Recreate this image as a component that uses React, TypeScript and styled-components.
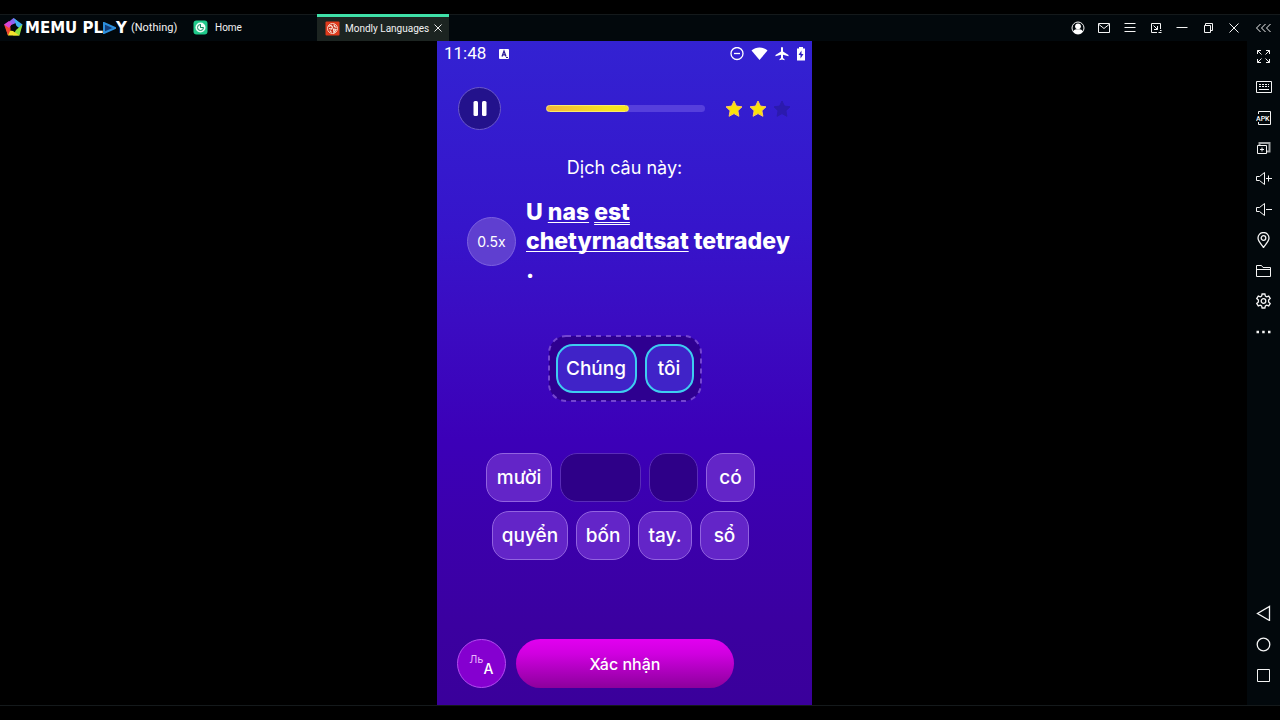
import React from 'react';
import styled, { createGlobalStyle, css } from 'styled-components';

const GlobalStyle = createGlobalStyle`
  *, *::before, *::after { box-sizing: border-box; }
  body { margin: 0; background: #000; }
  button { font: inherit; color: inherit; padding: 0; border: 0; background: none; cursor: pointer; }
  svg { display: block; flex: none; }
`;

const chromeColor = '#02080c';
const edgeColor = '#14191b';

const Page = styled.div`
  display: flex;
  flex-direction: column;
  min-height: 100vh;
  padding: 14px 0;
  background: #000;
  color: #fff;
  font-family: Roboto, sans-serif;
`;

const TitleBar = styled.header`
  display: flex;
  align-items: stretch;
  height: 27px;
  background: ${chromeColor};
  box-shadow: inset 0 1px ${edgeColor};
  font-size: 11px;
  color: #f2f2f2;
`;

const Brand = styled.div`
  display: flex;
  align-items: center;
  width: 184px;
  padding-left: 4px;
`;

const BrandName = styled.span`
  display: flex;
  align-items: center;
  margin: 0 4px 0 2px;
  font: bold 15px/16px 'DejaVu Sans', sans-serif;
  color: #fff;
`;

const Tab = styled.button<{ $active?: boolean }>`
  display: flex;
  align-items: center;
  gap: 7px;
  width: 133px;
  padding-left: 9px;
  font-size: 10px;
  white-space: nowrap;
  ${(p) =>
    p.$active &&
    css`
      width: 132px;
      background: #1c2421;
      border-top: 3px solid #3fe0a8;
      gap: 5px;
      padding-left: 8px;
      padding-bottom: 2px;
    `}
`;

const WindowTools = styled.div`
  display: flex;
  margin-left: auto;
`;

const ToolButton = styled.button<{ $width: number }>`
  display: grid;
  place-items: center;
  width: ${(p) => p.$width}px;
`;

const Body = styled.div`
  display: flex;
  flex: 1;
  border-bottom: 1px solid ${edgeColor};
`;

const Stage = styled.main`
  display: flex;
  flex: 1;
  justify-content: center;
  padding-left: 2px;
`;

const SideBar = styled.aside`
  display: flex;
  flex-direction: column;
  justify-content: space-between;
  width: 33px;
  padding: 1px 0 15px;
  background: ${chromeColor};
`;

const SideGroup = styled.nav<{ $height: number }>`
  display: flex;
  flex-direction: column;
  height: ${(p) => p.$height}px;
`;

const SideButton = styled.button`
  display: grid;
  place-items: center;
  flex: 1;
`;

const Phone = styled.section`
  display: flex;
  flex-direction: column;
  width: 375px;
  background: linear-gradient(#3322d2 0%, #3615cb 28%, #3b0cc2 42%, #3c00b8 60%, #3b00a0 88%, #3a009b 100%);
  font-family: Inter, 'Noto Sans', sans-serif;
`;

const StatusBar = styled.div`
  display: flex;
  align-items: center;
  gap: 12px;
  height: 25px;
  padding: 0 6px 0 7px;
  font: 400 17px/25px Roboto, sans-serif;
`;

const StatusIcons = styled.div`
  display: flex;
  align-items: center;
  gap: 7px;
  margin-left: auto;
`;

const LessonHeader = styled.div`
  display: flex;
  align-items: center;
  height: 43px;
  margin: 21px 21px 0 21px;
`;

const PauseButton = styled.button`
  display: grid;
  place-items: center;
  width: 43px;
  height: 43px;
  border: 1px solid #6a58c8;
  border-radius: 50%;
  background: #23128c;
`;

const Track = styled.div`
  flex: 1;
  height: 7px;
  margin: 0 20px 0 45px;
  border-radius: 4px;
  background: #563fdc;
`;

const Fill = styled.div`
  height: 100%;
  border: 1px solid #fbe96a;
  border-radius: 4px;
  background: linear-gradient(90deg, #f3b63a, #f7e51e 75%);
`;

const Stars = styled.div`
  display: flex;
  gap: 6px;
`;

const Prompt = styled.h1`
  margin: 25px 0 0;
  font-size: 18px;
  line-height: 26px;
  font-weight: 400;
  text-align: center;
`;

const SentenceRow = styled.div`
  display: flex;
  align-items: center;
  gap: 10px;
  margin: 17px 0 0 30px;
`;

const SpeedButton = styled.button`
  width: 49px;
  height: 49px;
  border: 1px solid #7d62e0;
  border-radius: 50%;
  background: #5f3fd0;
  font-size: 14px;
`;

const Sentence = styled.p`
  margin: 0;
  font-size: 23px;
  line-height: 29px;
  font-weight: 800;
  white-space: nowrap;
`;

const Word = styled.span<{ $double?: boolean }>`
  text-decoration: underline ${(p) => (p.$double ? 'double' : 'solid')} 1px;
  text-underline-offset: 2px;
  text-decoration-skip-ink: none;
`;

const Tray = styled.div`
  position: relative;
  display: flex;
  align-self: center;
  gap: 8px;
  margin-top: 50px;
  padding: 9px 8px;
`;

const TrayOutline = styled.svg`
  position: absolute;
  inset: 1px;
  width: calc(100% - 2px);
  height: calc(100% - 2px);
  overflow: visible;
`;

type TileKind = 'choice' | 'picked' | 'used';

const tileKinds = {
  choice: css`
    border: 1px solid #9263e0;
    background: #6325c8;
  `,
  picked: css`
    border: 2px solid #3ecdf0;
    background: #4023c8;
  `,
  used: css`
    border: 1px solid #5a2cb8;
    background: #2e0088;
  `,
};

const Tile = styled.button<{ $kind: TileKind; $width: number }>`
  position: relative;
  width: ${(p) => p.$width}px;
  height: 49px;
  border-radius: 17px;
  font-size: 19px;
  font-weight: 500;
  ${(p) => tileKinds[p.$kind]}
`;

const Bank = styled.div`
  display: flex;
  flex-direction: column;
  align-items: center;
  gap: 9px;
  margin: 51px 8px 0 0;
`;

const BankRow = styled.div`
  display: flex;
  gap: 8px;
`;

const Actions = styled.div`
  display: flex;
  gap: 10px;
  margin-top: auto;
  padding: 20px 78px 17px 20px;
`;

const AlphabetButton = styled.button`
  display: flex;
  justify-content: center;
  align-items: center;
  width: 49px;
  height: 49px;
  border: 1px solid #b44cf0;
  border-radius: 50%;
  background: #8500d0;
`;

const Cyrillic = styled.span`
  align-self: flex-start;
  padding-top: 13px;
  font: 400 11px/12px 'Noto Sans', sans-serif;
  color: #eab4fb;
`;

const Latin = styled.span`
  align-self: flex-end;
  padding-bottom: 11px;
  font-size: 14px;
  font-weight: 500;
  line-height: 14px;
`;

const ConfirmButton = styled.button`
  flex: 1;
  height: 49px;
  border-radius: 25px;
  background: linear-gradient(#e200f0, #d000e0 30%, #8c009c);
  font-size: 16px;
  font-weight: 500;
`;

const Line = ({ children }: { children: React.ReactNode }) => (
  <svg width="16" height="16" viewBox="0 0 16 16" fill="none" stroke="#f4f4f4" aria-hidden="true">
    {children}
  </svg>
);

const windowTools: [string, React.ReactNode][] = [
  ['Account', <><circle cx="8" cy="8" r="6" /><circle cx="8" cy="6.3" r="2.9" fill="#fff" stroke="none" /><path d="M3 11.500C4 9.400 6 9.200 8 9.200s4 .2 5 2.300C11.500 13.500 10 14 8 14s-3.500-.5-5-2.500Z" fill="#fff" stroke="none" /></>],
  ['Messages', <><path d="M2.500 3.500h11v9h-11z" /><path d="m3 4.500 5 4 5-4" /></>],
  ['Menu', <path d="M2.500 3.500h11M2.500 7.500h11M2.500 11.500h11" />],
  ['Mini window', <><path d="M9 12.500H3.500v-9h9V9" /><path d="m5.500 5.500 4 4m0-3.500v3.500H6M10.500 12.500h3M12 10.500h1.500" /></>],
  ['Minimize', <path d="M2.500 7.500h11" />],
  ['Restore', <><path d="M4.500 5.500h6v7h-6z" /><path d="M5.500 5.500v-2h7v7h-2" /></>],
  ['Close', <path d="m3.500 3.500 9 9m0-9-9 9" />],
];

const sideTools: [string, React.ReactNode][] = [
  ['Full screen', <path d="M1.500 5V1.500H5M1.500 1.500l4 4M10 1.500h3.500V5M13.500 1.500l-4 4M1.500 10v3.500H5M1.500 13.500l4-4M13.500 10v3.500H10M13.500 13.500l-4-4" />],
  ['Keyboard', <><path d="M.5 1.500h15v11H.5z" /><path d="M3 4.500h10M3 6.500h10" strokeDasharray="2 1" /><path d="M3 9.500h10" /></>],
  ['Install APK', <><path d="M2.500 4V1.500h12v13h-12V12" /><text x="0" y="11" fontSize="7" fontWeight="500" fill="#fff" stroke="none" fontFamily="Roboto, sans-serif">APK</text></>],
  ['Multi instance', <><path d="M1.500 4.500h9v8h-9z" /><path d="M3.500 4V2h10v8.500H11" strokeWidth="2" stroke="#a0a3a4" /><path d="M6 6.500v4M4 8.500h4" /></>],
  ['Volume up', <path d="M.5 5.500h3l5-4v12l-5-4h-3zM10 7.500h6M12.500 4.500v6" />],
  ['Volume down', <path d="M.5 5.500h3l5-4v12l-5-4h-3zM10 7.500h6" />],
  ['Location', <><path d="M7.500 15.500C5 12 2 9 2 6a5.500 5.500 0 0 1 11 0c0 3-3 6-5.500 9.500Z" strokeWidth="1.300" /><circle cx="7.500" cy="6" r="2.300" strokeWidth="1.300" /></>],
  ['Shared folder', <path d="M.5 13.500v-11h5l1.500 2h7.500v9zM.5 6.500h14" />],
  ['Settings', <g transform="translate(-.5 0)" strokeWidth="1.300"><path d="M6.600 1h2.800l.5 2.100 1.300.7 2-.7 1.500 2.400-1.600 1.500v2l1.600 1.500-1.500 2.400-2-.7-1.300.7-.5 2.100H6.600l-.5-2.100-1.300-.7-2 .7-1.500-2.400L2.900 9V7L1.300 5.500l1.500-2.400 2 .7 1.300-.7z" /><circle cx="8" cy="8" r="2.300" /></g>],
  ['More', <path d="M.5 8H3M6.200 8h2.500M12 8h2.500" strokeWidth="2.500" />],
];

const navTools: [string, React.ReactNode][] = [
  ['Back', <path d="M13.500 1.500v14L1.500 8.500z" strokeWidth="1.300" />],
  ['Home screen', <circle cx="7.500" cy="8.500" r="6.300" strokeWidth="1.300" />],
  ['Recent apps', <path d="M1.500 2.500h12v12h-12z" />],
];

const BrandLogo = () => (
  <svg width="19" height="19" viewBox="0 0 19 19" aria-hidden="true">
    <path d="M9.500 0 14 3.500 9 6.500 5 7 1 7z" fill="#8a63f0" />
    <path d="M9.500 0 18.500 6.500 16.500 11 12.500 8z" fill="#3fb0f0" />
    <path d="M18.500 6.500 15.500 17.500 9 17.500 12 12z" fill="#8ee03a" />
    <path d="M15.500 17.500H4L2.500 12 9 13z" fill="#f5e12c" />
    <path d="M0 6.500 6.500 7 6.500 12 4 17.500z" fill="#f0472f" />
    <path d="M0 6.500 5 3l3 3-3 4z" fill="#d746d8" />
    <path d="m9.500 6 3 2.500-1 3.500h-4L6.500 8.500z" fill="#03080b" />
  </svg>
);

const Star = ({ on }: { on: boolean }) => (
  <svg width="18" height="18" viewBox="0 0 18 18" aria-hidden="true">
    <path
      d="m9 1 2.400 5.100 5.600.7-4.100 3.900 1 5.600L9 13.600l-4.900 2.700 1-5.600L1 6.800l5.600-.7z"
      fill={on ? '#fbe308' : '#2b1aae'}
      stroke={on ? '#fbc65a' : '#2b1aae'}
      strokeLinejoin="round"
    />
  </svg>
);

const picked = [
  { text: 'Chúng', width: 81 },
  { text: 'tôi', width: 49 },
];

const bank: { text: string; width: number; kind: TileKind }[][] = [
  [
    { text: 'mười', width: 66, kind: 'choice' },
    { text: '', width: 81, kind: 'used' },
    { text: '', width: 49, kind: 'used' },
    { text: 'có', width: 49, kind: 'choice' },
  ],
  [
    { text: 'quyển', width: 76, kind: 'choice' },
    { text: 'bốn', width: 54, kind: 'choice' },
    { text: 'tay.', width: 54, kind: 'choice' },
    { text: 'sổ', width: 49, kind: 'choice' },
  ],
];

export default function App() {
  return (
    <Page>
      <GlobalStyle />
      <TitleBar>
        <Brand>
          <BrandLogo />
          <BrandName>
            MEMU&nbsp;PL
            <svg width="13" height="12" viewBox="0 0 13 12" aria-hidden="true">
              <path d="M1 1v10l11-5z" fill="#123c78" stroke="#2d8fdc" strokeWidth="2" />
            </svg>
            Y
          </BrandName>
          (Nothing)
        </Brand>
        <Tab>
          <svg width="15" height="15" viewBox="0 0 15 15" aria-hidden="true">
            <rect x=".5" y=".5" width="14" height="14" rx="3" fill="#1fc98a" />
            <circle cx="7.500" cy="7.500" r="5" fill="#effff8" />
            <path d="M7.500 4.500a3 3 0 1 0 3 3h-3zM7.500 4.500v3" fill="none" stroke="#128a60" />
          </svg>
          Home
        </Tab>
        <Tab $active>
          <svg width="15" height="15" viewBox="0 0 15 15" aria-hidden="true">
            <rect x=".5" y=".5" width="14" height="14" rx="1" fill="#e03a1c" />
            <circle cx="7.500" cy="7.500" r="5" fill="#c9301a" stroke="#f7d3c4" />
            <path d="M3.500 5.500 6 4.500l1.500 1.500L6.500 8 4 7.500M9 3.500l.5 2 2 1M8.500 8l2.500.5L9 11.500zM5 9.500l1.500 2" fill="none" stroke="#fbe6d8" strokeWidth="1.200" />
          </svg>
          Mondly Languages
          <svg width="8" height="8" viewBox="0 0 8 8" stroke="#e8e8e8" aria-hidden="true">
            <path d="m.5.5 7 7m0-7-7 7" />
          </svg>
        </Tab>
        <WindowTools>
          {windowTools.map(([name, art]) => (
            <ToolButton key={name} $width={26} aria-label={name}>
              <Line>{art}</Line>
            </ToolButton>
          ))}
          <ToolButton $width={33} aria-label="Collapse side bar">
            <Line>
              <path d="M4.500 4 .5 8l4 4M9.500 4l-4 4 4 4M14.500 4l-4 4 4 4" />
            </Line>
          </ToolButton>
        </WindowTools>
      </TitleBar>
      <Body>
        <Stage>
          <Phone>
            <StatusBar>
              11:48
              <svg width="12" height="12" viewBox="0 0 12 12" aria-hidden="true">
                <rect x="1" y="1" width="10" height="10" rx="1" fill="#fff" />
                <path d="M4 8.500 6 3l2 5.500M4.700 6.800h2.600M8 9.500h2" fill="none" stroke="#2a1c96" strokeWidth="1.200" />
              </svg>
              <StatusIcons>
                <svg width="14" height="14" viewBox="0 0 14 14" fill="none" stroke="#fff" strokeWidth="1.300" aria-hidden="true">
                  <circle cx="7" cy="6.500" r="6" />
                  <path d="M4 6.500h6" />
                </svg>
                <svg width="17" height="14" viewBox="0 0 17 14" fill="#fff" aria-hidden="true">
                  <path d="M.5 3.500C5-.5 12-.5 16.500 3.500L8.500 13z" />
                </svg>
                <svg width="14" height="14" viewBox="0 0 14 14" fill="#fff" aria-hidden="true">
                  <path d="M6 1a1 1 0 0 1 2 0v3.500L13.500 8v1.300L8 7.700V11l1.500 1.200v1L7 12.500l-2.500.7v-1L6 11V7.700L.5 9.300V8L6 4.500z" />
                </svg>
                <svg width="10" height="14" viewBox="0 0 10 14" aria-hidden="true">
                  <path d="M3 0h4v1.500h2V13.500H1v-12h2z" fill="#fff" />
                  <path d="M5.500 3.500V7h2l-3 4.500V8h-2z" fill="#2e1ec0" />
                </svg>
              </StatusIcons>
            </StatusBar>
            <LessonHeader>
              <PauseButton aria-label="Pause">
                <svg width="14" height="15" viewBox="0 0 14 15" fill="#fff" aria-hidden="true">
                  <rect x=".5" y="0" width="4.500" height="15" rx="1.500" />
                  <rect x="9" y="0" width="4.500" height="15" rx="1.500" />
                </svg>
              </PauseButton>
              <Track>
                <Fill style={{ width: '52%' }} />
              </Track>
              <Stars>
                <Star on />
                <Star on />
                <Star on={false} />
              </Stars>
            </LessonHeader>
            <Prompt>Dịch câu này:</Prompt>
            <SentenceRow>
              <SpeedButton>0.5x</SpeedButton>
              <Sentence>
                U <Word>nas</Word> <Word $double>est</Word>
                <br />
                <Word>chetyrnadtsat</Word> tetradey
                <br />.
              </Sentence>
            </SentenceRow>
            <Tray>
              <TrayOutline aria-hidden="true">
                <rect
                  width="100%"
                  height="100%"
                  rx="17"
                  fill="#2e0090"
                  stroke="#7446d0"
                  strokeWidth="2"
                  strokeDasharray="5 5"
                />
              </TrayOutline>
              {picked.map((t) => (
                <Tile key={t.text} $kind="picked" $width={t.width}>{t.text}</Tile>
              ))}
            </Tray>
            <Bank>
              {bank.map((row, i) => (
                <BankRow key={i}>
                  {row.map((t, j) => (
                    <Tile key={j} $kind={t.kind} $width={t.width} disabled={t.kind === 'used'}>{t.text}</Tile>
                  ))}
                </BankRow>
              ))}
            </Bank>
            <Actions>
              <AlphabetButton aria-label="Switch alphabet">
                <Cyrillic>Ль</Cyrillic>
                <Latin>A</Latin>
              </AlphabetButton>
              <ConfirmButton>Xác nhận</ConfirmButton>
            </Actions>
          </Phone>
        </Stage>
        <SideBar>
          <SideGroup $height={305} aria-label="Emulator tools">
            {sideTools.map(([name, art]) => (
              <SideButton key={name} aria-label={name}>
                <Line>{art}</Line>
              </SideButton>
            ))}
          </SideGroup>
          <SideGroup $height={92} aria-label="Android navigation">
            {navTools.map(([name, art]) => (
              <SideButton key={name} aria-label={name}>
                <Line>{art}</Line>
              </SideButton>
            ))}
          </SideGroup>
        </SideBar>
      </Body>
    </Page>
  );
}
